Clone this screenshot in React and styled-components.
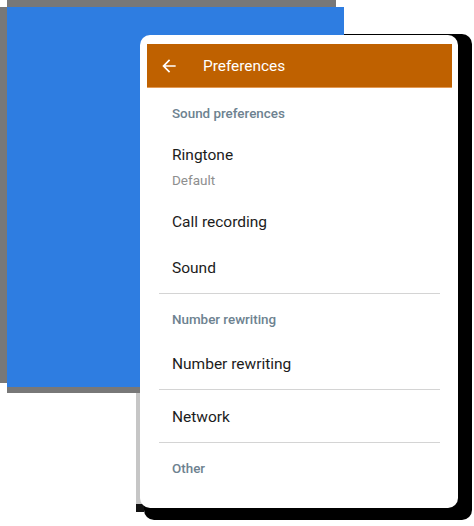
import React from "react";
import styled, { createGlobalStyle } from "styled-components";

const Global = createGlobalStyle`
  html, body { margin: 0; padding: 0; background: #ffffff; }
  body { font-family: Roboto, "Noto Sans", "Liberation Sans", sans-serif; }
`;

const Stage = styled.div`
  position: relative;
  width: 474px;
  height: 526px;
  overflow: hidden;
  isolation: isolate;
  background: #ffffff;
`;

const Backdrop = styled.div`
  position: absolute;
  left: 7px;
  top: 7px;
  width: 337px;
  height: 380px;
  background: #2e7de1;
  box-shadow: -4px -11px 0 -4px #787878, -9px -2px 0 -2px #787878, 0 6px 0 #787878;
`;

const Card = styled.div`
  position: absolute;
  left: 140px;
  top: 35px;
  width: 318px;
  height: 473px;
  box-sizing: border-box;
  padding: 9px 6px 0 7px;
  background: #ffffff;
  border-radius: 10px;
  display: flex;
  flex-direction: column;

  &::before {
    content: "";
    position: absolute;
    z-index: -1;
    left: 4px;
    top: -1px;
    right: -14px;
    bottom: -12px;
    border-radius: 10px;
    background: #000000;
  }

  &::after {
    content: "";
    position: absolute;
    z-index: -1;
    left: -4px;
    top: 0;
    bottom: -4px;
    width: 8px;
    background: linear-gradient(to bottom, #c6c6c6 calc(100% - 8px), #111 calc(100% - 8px));
  }
`;

const AppBar = styled.div`
  height: 43px;
  display: flex;
  align-items: center;
  gap: 24px;
  padding-left: 12px;
  background: #bf6100;
  border-bottom: 1px solid #e39a55;
  color: #ffffff;
`;

const BackIcon = styled.svg`
  width: 20px;
  height: 20px;
  flex: none;
  fill: #ffffff;
`;

const Title = styled.div`
  font-size: 15.4px;
  line-height: 20px;
  font-weight: 400;
  padding-top: 1px;
`;

const List = styled.div`
  display: flex;
  flex-direction: column;
`;

const SectionHeader = styled.div`
  height: 43px;
  box-sizing: border-box;
  padding: 17px 0 0 25px;
  font-size: 13.4px;
  line-height: 18px;
  font-weight: 500;
  color: #6d8290;
`;

const Row = styled.div`
  height: ${(p) => p.$h}px;
  box-sizing: border-box;
  padding: 2px 0 0 25px;
  display: flex;
  flex-direction: column;
  justify-content: center;
`;

const TwoLineRow = styled.div`
  height: 67px;
  box-sizing: border-box;
  padding: 14px 0 0 25px;
  display: flex;
  flex-direction: column;
  gap: 6px;
`;

const ItemTitle = styled.div`
  font-size: 15.5px;
  line-height: 20px;
  color: #1c1c1c;
`;

const Summary = styled.div`
  font-size: 13.5px;
  line-height: 18px;
  color: #8e8e8e;
`;

const Divider = styled.div`
  height: 1px;
  margin: ${(p) => p.$top || 0}px 12px 0;
  background: #d4d4d4;
`;

export default function App() {
  return (
    <>
      <Global />
      <Stage>
        <Backdrop />
        <Card>
          <AppBar>
            <BackIcon viewBox="0 0 24 24">
              <path d="M20 11H7.83l5.59-5.59L12 4l-8 8 8 8 1.41-1.41L7.83 13H20v-2z" />
            </BackIcon>
            <Title>Preferences</Title>
          </AppBar>
          <List>
            <SectionHeader>Sound preferences</SectionHeader>
            <TwoLineRow>
              <ItemTitle>Ringtone</ItemTitle>
              <Summary>Default</Summary>
            </TwoLineRow>
            <Row $h={46}>
              <ItemTitle>Call recording</ItemTitle>
            </Row>
            <Row $h={46}>
              <ItemTitle>Sound</ItemTitle>
            </Row>
            <Divider $top={3} />
            <SectionHeader>Number rewriting</SectionHeader>
            <Row $h={52}>
              <ItemTitle>Number rewriting</ItemTitle>
            </Row>
            <Divider />
            <Row $h={52}>
              <ItemTitle>Network</ItemTitle>
            </Row>
            <Divider />
            <SectionHeader>Other</SectionHeader>
          </List>
        </Card>
      </Stage>
    </>
  );
}
